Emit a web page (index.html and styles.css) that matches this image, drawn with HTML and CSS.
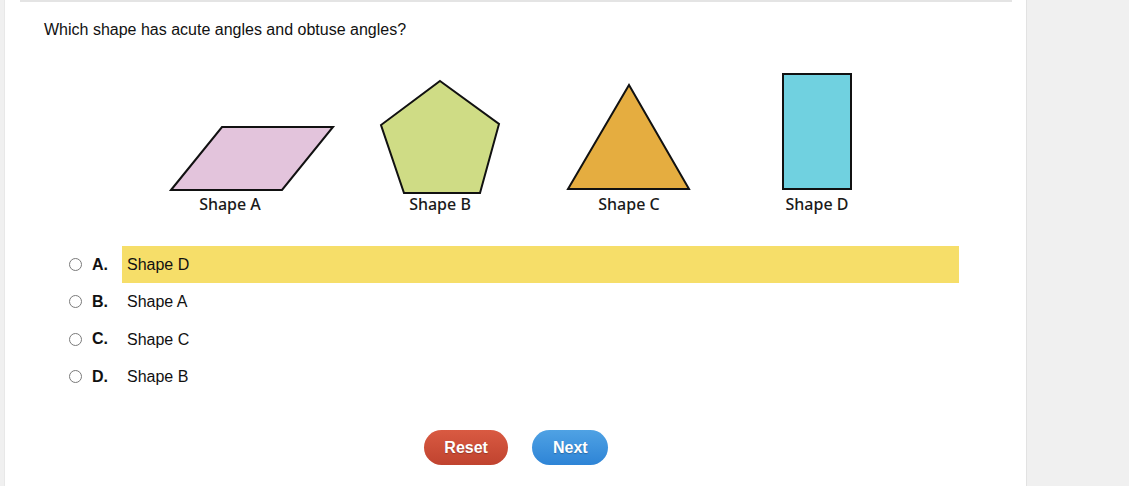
FILE: index.html
```html
<!DOCTYPE html>
<html>
<head>
<meta charset="utf-8">
<link rel="stylesheet" href="styles.css">
</head>
<body>
<div class="page">
  <div class="topline"></div>
  <p class="question">Which shape has acute angles and obtuse angles?</p>
  <svg class="figure" width="700" height="146" viewBox="160 70 700 146" xmlns="http://www.w3.org/2000/svg">
    <polygon points="171,190 222,127 333,127 282,190" fill="#e3c4dc" stroke="#111" stroke-width="2" stroke-linejoin="miter"/>
    <polygon points="440,81 499,124 480,193 404,193 381,125" fill="#cfdc85" stroke="#111" stroke-width="2"/>
    <polygon points="629,85 689,189 568,189" fill="#e5ad40" stroke="#111" stroke-width="2"/>
    <rect x="783" y="74" width="68" height="115" fill="#70d1e0" stroke="#111" stroke-width="2"/>
    <text x="230" y="209.5" class="lbl" text-anchor="middle">Shape A</text>
    <text x="440" y="209.5" class="lbl" text-anchor="middle">Shape B</text>
    <text x="629" y="209.5" class="lbl" text-anchor="middle">Shape C</text>
    <text x="817" y="209.5" class="lbl" text-anchor="middle">Shape D</text>
  </svg>
  <ul class="options">
    <li class="opt"><span class="radio"></span><span class="letter">A.</span><span class="text hl">Shape D</span></li>
    <li class="opt"><span class="radio"></span><span class="letter">B.</span><span class="text">Shape A</span></li>
    <li class="opt"><span class="radio"></span><span class="letter">C.</span><span class="text">Shape C</span></li>
    <li class="opt"><span class="radio"></span><span class="letter">D.</span><span class="text">Shape B</span></li>
  </ul>
  <div class="buttons">
    <button class="btn reset">Reset</button>
    <button class="btn next">Next</button>
  </div>
</div>
</body>
</html>
```
FILE: styles.css
```css
html, body {
  margin: 0;
  padding: 0;
  height: 100%;
}
body {
  background: #f0f0f0;
  font-family: "Liberation Sans", Arial, sans-serif;
  color: #111;
  overflow: hidden;
}
.page {
  margin-left: 4px;
  width: 1023px;
  min-height: 486px;
  background: #fff;
  border-right: 1px solid #e2e2e2;
  border-left: 1px solid #e8e8e8;
  box-sizing: border-box;
}
.topline {
  margin: 0 14px 0 15px;
  border-top: 2px solid #e4e4e4;
}
.question {
  margin: 0;
  padding: 18px 0 0 39px;
  font-size: 16px;
  line-height: 20px;
}
.figure {
  display: block;
  margin: 30px 0 0 155px;
}
.lbl {
  font-family: "Noto Sans", sans-serif;
  font-size: 16px;
  font-weight: 500;
  fill: #1a1a1a;
}
.options {
  list-style: none;
  margin: 30px 0 0 0;
  padding: 0;
}
.opt {
  display: flex;
  align-items: center;
  height: 37.3px;
  font-size: 16px;
}
.radio {
  box-sizing: border-box;
  width: 13px;
  height: 13px;
  border: 1px solid #7a7a7a;
  border-radius: 50%;
  margin-left: 64px;
  margin-right: 10px;
  flex: none;
}
.letter {
  font-weight: bold;
  width: 30px;
  flex: none;
}
.text {
  width: 837px;
  height: 37px;
  line-height: 37px;
  padding-left: 5px;
  box-sizing: border-box;
}
.hl {
  background: #f6de69;
}
.buttons {
  display: flex;
  justify-content: center;
  gap: 24px;
  margin-top: 35px;
  padding-left: 1px;
}
.btn {
  height: 35px;
  border: none;
  border-radius: 18px;
  padding: 0 20.5px;
  font-family: "Liberation Sans", Arial, sans-serif;
  font-weight: bold;
  font-size: 16px;
  color: #fff;
  text-shadow: 0 1px 1px rgba(0,0,0,0.25);
}
.reset {
  background: linear-gradient(#d95a42, #c0432f);
}
.next {
  background: linear-gradient(#4fa2e4, #2e84d6);
}
```
